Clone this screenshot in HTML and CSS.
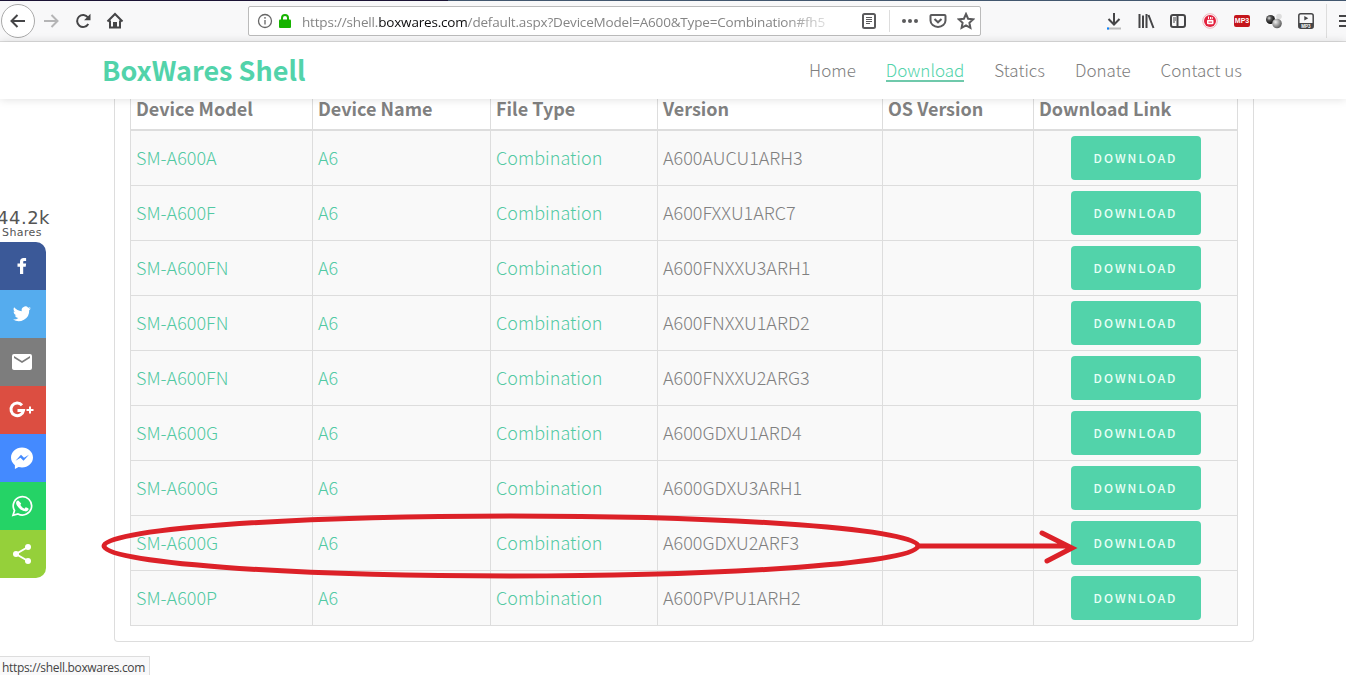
FILE: index.html
```
<!DOCTYPE html>
<html lang="en">
  <head>
    <meta charset="UTF-8">
    <title>BoxWares Shell</title>
    <link rel="stylesheet" href="styles.css">
  </head>
  <body>
    <!-- browser toolbar -->
    <div class="toolbar">
      <div class="tools">
        <span class="tool back"><svg width="18" height="18" viewBox="0 0 18 18"><path d="M16 9H2.500M8.500 3L2.500 9l6 6"/></svg></span>
        <span class="tool forward"><svg width="18" height="18" viewBox="0 0 18 18"><path d="M2 9h13.500M9.500 3l6 6-6 6"/></svg></span>
        <span class="tool"><svg width="18" height="18" viewBox="0 0 18 18"><path d="M14.300 12A6 6 0 1 1 14 5.500"/><path class="solid" d="M16.500 1.800v6.400h-6.400z"/></svg></span>
        <span class="tool"><svg width="18" height="18" viewBox="0 0 18 18"><path d="M1.500 9.500L9 2l7.500 7.500M4 8.500v7h10v-7"/><path class="solid" d="M7 10h4v5H7z"/></svg></span>
      </div>
      <div class="urlbar">
        <svg class="info" width="16" height="16" viewBox="0 0 16 16"><circle cx="8" cy="8" r="6.500"/><path d="M8 7v4.500M8 4v1.700"/></svg>
        <svg class="lock" width="14" height="16" viewBox="0 0 14 16"><path d="M4 7V5a3 3 0 0 1 6 0v2"/><rect x="1" y="6.500" width="12" height="8.500" rx="1"/></svg>
        <span class="url">https://shell.<b>boxwares.com</b>/default.aspx?DeviceModel=A600&amp;Type=Combination#fh5</span>
        <span class="tool reader"><svg width="16" height="18" viewBox="0 0 16 18"><rect x="2" y="2" width="12" height="14" rx="1.500"/><path class="thin" d="M5 5.500h6M5 7.500h6M5 9.500h6M5 11.500h4"/></svg></span>
        <span class="divider"></span>
        <span class="tool dots"><svg width="18" height="6" viewBox="0 0 18 6"><circle cx="3" cy="3" r="2"/><circle cx="9" cy="3" r="2"/><circle cx="15" cy="3" r="2"/></svg></span>
        <span class="tool pocket"><svg width="18" height="16" viewBox="0 0 18 16"><path d="M2.500 2h13a1 1 0 0 1 1 1v4.500a7.500 6.500 0 0 1-15 0V3a1 1 0 0 1 1-1z"/><path d="M5.500 6L9 9.300 12.500 6"/></svg></span>
        <span class="tool star"><svg width="18" height="18" viewBox="0 0 18 18"><path d="M9 2l2.100 4.700 5.100.6-3.800 3.500 1 5.100L9 13.400l-4.400 2.500 1-5.100-3.800-3.500 5.100-.6z"/></svg></span>
      </div>
      <div class="tools addons">
        <span class="tool"><svg width="18" height="18" viewBox="0 0 18 18"><path d="M9 1v11M3.500 7L9 12.500 14.500 7"/><path class="progress" d="M2 16.500h14"/><path class="done" d="M2 16.500h2"/></svg></span>
        <span class="tool"><svg width="18" height="18" viewBox="0 0 18 18"><path d="M2.500 2v14M6 3.500V16M9.500 2v14M11.500 3l5 13"/></svg></span>
        <span class="tool"><svg width="18" height="18" viewBox="0 0 18 18"><rect x="2" y="3" width="14" height="12" rx="2"/><path d="M8.500 3v12"/><path class="thin" d="M4 6h3M4 8h3M4 10h2"/></svg></span>
        <span class="tool"><svg width="18" height="18" viewBox="0 0 18 18"><circle class="ring" cx="9" cy="9" r="7.300"/><circle class="red" cx="9" cy="9" r="6"/><path class="mark" d="M7.500 4.500v2.500M9.500 5v2M11.200 5v2"/><rect class="screen" x="6" y="7.800" width="6.500" height="4.500" rx="1"/><path class="red" d="M7.500 9.600h3.500v1H7.500z"/></svg></span>
        <span class="tool"><span class="mp3">MP3</span></span>
        <span class="tool"><svg width="18" height="18" viewBox="0 0 18 18">
          <defs>
            <radialGradient id="dark" cx=".35" cy=".35" r=".6"><stop offset="0" stop-color="#ddd"/><stop offset=".4" stop-color="#555"/><stop offset="1" stop-color="#111"/></radialGradient>
            <radialGradient id="grey" cx=".35" cy=".35" r=".7"><stop offset="0" stop-color="#eee"/><stop offset="1" stop-color="#555"/></radialGradient>
          </defs>
          <circle cx="14" cy="4.500" r="2.800" fill="#ddd"/><circle cx="5.500" cy="7.500" r="4.500" fill="url(#dark)"/><circle cx="12" cy="11.500" r="4.800" fill="url(#grey)"/></svg></span>
        <span class="tool"><svg width="18" height="18" viewBox="0 0 18 18"><rect class="frame" x="1.800" y="1.800" width="14.400" height="14.400" rx="2"/><path class="solid" d="M2 11h14v5H2zM7.300 4l4 2.300-4 2.300z"/><text class="tiny" x="9" y="15.500">MP3</text></svg></span>
      </div>
      <span class="menu"></span>
    </div>

    <div class="navbar">
      <a class="brand">BoxWares Shell</a>
      <ul class="nav">
        <li><a>Home</a></li>
        <li><a class="active">Download</a></li>
        <li><a>Statics</a></li>
        <li><a>Donate</a></li>
        <li><a>Contact us</a></li>
      </ul>
    </div>

    <div class="panel">
      <table class="files">
        <colgroup><col class="c-model"><col class="c-name"><col class="c-type"><col class="c-version"><col class="c-os"><col class="c-link"></colgroup>
        <thead>
          <tr><th>Device Model</th><th>Device Name</th><th>File Type</th><th>Version</th><th>OS Version</th><th>Download Link</th></tr>
        </thead>
        <tbody>
          <tr><td><a>SM-A600A</a></td><td><a>A6</a></td><td><a>Combination</a></td><td>A600AUCU1ARH3</td><td></td><td class="action"><a class="btn">DOWNLOAD</a></td></tr>
          <tr><td><a>SM-A600F</a></td><td><a>A6</a></td><td><a>Combination</a></td><td>A600FXXU1ARC7</td><td></td><td class="action"><a class="btn">DOWNLOAD</a></td></tr>
          <tr><td><a>SM-A600FN</a></td><td><a>A6</a></td><td><a>Combination</a></td><td>A600FNXXU3ARH1</td><td></td><td class="action"><a class="btn">DOWNLOAD</a></td></tr>
          <tr><td><a>SM-A600FN</a></td><td><a>A6</a></td><td><a>Combination</a></td><td>A600FNXXU1ARD2</td><td></td><td class="action"><a class="btn">DOWNLOAD</a></td></tr>
          <tr><td><a>SM-A600FN</a></td><td><a>A6</a></td><td><a>Combination</a></td><td>A600FNXXU2ARG3</td><td></td><td class="action"><a class="btn">DOWNLOAD</a></td></tr>
          <tr><td><a>SM-A600G</a></td><td><a>A6</a></td><td><a>Combination</a></td><td>A600GDXU1ARD4</td><td></td><td class="action"><a class="btn">DOWNLOAD</a></td></tr>
          <tr><td><a>SM-A600G</a></td><td><a>A6</a></td><td><a>Combination</a></td><td>A600GDXU3ARH1</td><td></td><td class="action"><a class="btn">DOWNLOAD</a></td></tr>
          <tr><td><a>SM-A600G</a></td><td><a>A6</a></td><td><a>Combination</a></td><td>A600GDXU2ARF3</td><td></td><td class="action"><a class="btn">DOWNLOAD</a></td></tr>
          <tr><td><a>SM-A600P</a></td><td><a>A6</a></td><td><a>Combination</a></td><td>A600PVPU1ARH2</td><td></td><td class="action"><a class="btn">DOWNLOAD</a></td></tr>
        </tbody>
      </table>
    </div>

    <!-- floating share buttons -->
    <div class="share">
      <div class="count">44.2k</div>
      <div class="label">Shares</div>
      <div class="buttons">
        <a class="facebook"><svg width="24" height="24" viewBox="0 0 24 24"><path d="M10 20v-7.300H7.500V9.600H10V7.500C10 5.200 11.400 4 13.500 4h2.600v3h-1.700c-1 0-1.200.5-1.200 1.200v1.400h2.900l-.4 3.100h-2.500V20z"/></svg></a>
        <a class="twitter"><svg width="24" height="24" viewBox="0 0 24 24"><path d="M21 6.300c-.7.300-1.400.5-2.100.6.800-.5 1.300-1.200 1.600-2-.7.400-1.500.7-2.300.9a3.700 3.700 0 0 0-6.400 3.400C8.700 9 6 7.500 4.100 5.200c-1 1.700-.5 3.800 1.200 4.900-.6 0-1.200-.2-1.700-.5 0 1.800 1.200 3.300 3 3.700-.6.100-1.100.2-1.700.1.500 1.500 1.900 2.500 3.500 2.600A7.500 7.500 0 0 1 3 17.500 10.500 10.500 0 0 0 19.200 8.200c.7-.5 1.300-1.200 1.800-1.900z"/></svg></a>
        <a class="email"><svg width="24" height="24" viewBox="0 0 24 24"><path d="M20 4H4a2 2 0 0 0-2 2v12c0 1.100.9 2 2 2h16a2 2 0 0 0 2-2V6a2 2 0 0 0-2-2zm0 4l-8 5-8-5V6l8 5 8-5z"/></svg></a>
        <a class="google"><svg width="26" height="24" viewBox="0 0 26 24"><path class="line" d="M14 7.200A6.300 6.300 0 1 0 15.500 12.500H9.500"/><path class="plus" d="M22 8.500v7M18.500 12h7"/></svg></a>
        <a class="messenger"><svg width="24" height="24" viewBox="0 0 24 24"><path d="M12 1.500C5.900 1.500 1 6 1 11.600c0 3.100 1.500 5.800 3.900 7.600V23l3.700-2c1.100.3 2.200.5 3.400.5 6.100 0 11-4.500 11-10S18.100 1.500 12 1.500z"/><path class="bolt" d="M5.500 14.800l5.500-6 3 3 5-3-5.500 6-3-3z"/></svg></a>
        <a class="whatsapp"><svg width="24" height="24" viewBox="0 0 24 24"><path class="outline" d="M3 21.300l1.500-4.800a9.200 9.200 0 1 1 3.500 3.400z"/><path d="M8.800 7c-.3-.6-.6-.6-.9-.6-.8 0-1.800 1-1.800 2.500s1.100 3 1.300 3.200c.1.200 2.100 3.300 5.200 4.500 2.600 1 3.100.8 3.700.7.600 0 1.800-.7 2.100-1.500.2-.7.200-1.300.1-1.400-.3-.3-2.400-1.300-2.700-1.200-.5.300-1 1.500-1.400 1.500-.5 0-2.700-1.300-4-3.600-.1-.4.800-1.200.8-1.600z"/></svg></a>
        <a class="sharethis"><svg width="24" height="24" viewBox="0 0 24 24"><path class="outline" d="M18 5L6 12l12 7"/><circle cx="18" cy="5" r="3"/><circle cx="6" cy="12" r="3"/><circle cx="18" cy="19" r="3"/></svg></a>
      </div>
    </div>

    <!-- hand drawn marker around the SM-A600G row -->
    <svg class="marker" width="980" height="72" viewBox="0 0 980 72">
      <ellipse cx="412" cy="37" rx="407" ry="30"/>
      <path d="M819 37h150M943 24l30 15-25 13"/>
    </svg>

    <div class="status">https://shell.boxwares.com</div>
  </body>
</html>
```
FILE: styles.css
```
* {
  box-sizing: border-box;
}

body {
  margin: 0;
  height: 675px;
  overflow: hidden;
  position: relative;
  background-color: #fff;
  color: #808080;
  font-family: "Noto Sans CJK SC", "Open Sans", sans-serif;
  font-weight: 300;
}

svg {
  display: block;
  flex: none;
}

/* browser toolbar */
.toolbar {
  display: flex;
  align-items: center;
  height: 42px;
  padding-left: 1px;
  overflow: hidden;
  background: linear-gradient(90deg, #1b1335 448px, #42576f 448px) top / 100% 1px no-repeat #f8f8f9;
  border-bottom: 1px solid #ddd;
}

.tools {
  display: flex;
  flex: none;
  align-items: center;
}

.tool {
  display: flex;
  flex: none;
  align-items: center;
  justify-content: center;
  width: 32px;
  height: 32px;
}

.tool svg {
  fill: none;
  stroke: #454547;
  stroke-width: 2;
}

.tool .solid {
  fill: #454547;
  stroke: none;
}

.tool .thin {
  stroke-width: 1;
}

.back {
  width: 34px;
  height: 34px;
  border: 1px solid #aaa;
  border-radius: 50%;
  background-color: #fff;
}

.forward svg {
  stroke: #b5b5b6;
}

.urlbar {
  display: flex;
  flex: none;
  align-items: center;
  width: 733px;
  height: 30px;
  margin-left: 117px;
  padding-left: 8px;
  border: 1px solid #bbb;
  border-radius: 2px;
  background-color: #fff;
}

.info {
  fill: none;
  stroke: #666;
  stroke-width: 1.3;
}

.lock {
  margin: 0 9px 0 5px;
  fill: #16b300;
}

.lock path {
  fill: none;
  stroke: #16b300;
  stroke-width: 2;
}

.url {
  flex: none;
  width: 524px;
  height: 20px;
  margin-left: 1px;
  overflow: hidden;
  color: #858585;
  font: 400 13.5px/22px "Open Sans", sans-serif;
  letter-spacing: -0.18px;
  white-space: nowrap;
  -webkit-mask-image: linear-gradient(90deg, #000 480px, rgba(0, 0, 0, 0.25) 524px);
}

.url b {
  color: #0c0c0d;
  font-weight: 400;
}

.reader {
  margin-left: 27px;
}

.divider {
  flex: none;
  width: 1px;
  height: 22px;
  margin: 0 4px;
  background-color: #ddd;
}

.urlbar .tool svg {
  stroke: #5a5a5c;
}

.dots svg circle {
  fill: #5a5a5c;
  stroke: none;
}

.pocket,
.star {
  width: 28px;
}

.pocket {
  margin-left: -2px;
}

.addons {
  margin-left: 117px;
}

.tool .progress {
  stroke: #bbb;
}

.tool .done {
  stroke: #0a84ff;
}

.tool .ring {
  stroke: #f0b5bd;
  stroke-width: 1;
}

.tool .red {
  fill: #e3203c;
  stroke: none;
}

.tool .mark {
  stroke: #fff;
  stroke-width: 1;
}

.tool .screen {
  fill: #fff;
  stroke: none;
}

.tool circle[fill] {
  stroke: none;
}

.tool .frame {
  stroke-width: 1.500;
}

.mp3 {
  width: 16px;
  height: 12px;
  border-radius: 2px;
  background-color: #c4161c;
  color: #fff;
  font: bold 7px/12px "Liberation Sans", sans-serif;
  text-align: center;
}

.tool .tiny {
  fill: #fff;
  stroke: none;
  font: bold 4.5px "Liberation Sans", sans-serif;
  text-anchor: middle;
}

.menu {
  flex: none;
  width: 21px;
  height: 34px;
  margin-left: 4px;
  border-left: 1px solid #ddd;
  background: repeating-linear-gradient(#454547 0 2px, transparent 2px 5px) 12px 11px / 16px 12px no-repeat;
}

/* site header */
.navbar {
  position: relative;
  z-index: 1;
  display: flex;
  align-items: center;
  justify-content: space-between;
  height: 57px;
  padding: 0 104px 0 102px;
  background-color: #fff;
  box-shadow: 0 0 9px rgba(0, 0, 0, 0.14);
}

.brand {
  padding-bottom: 2px;
  color: #52d3aa;
  font-size: 27px;
  font-weight: 700;
  line-height: 40px;
}

.nav {
  display: flex;
  gap: 30px;
  margin: 0;
  padding: 0;
  list-style: none;
  font-size: 17px;
  line-height: 20px;
}

.nav a {
  display: block;
  white-space: nowrap;
  border-bottom: 2px solid transparent;
}

.nav .active {
  color: #52d3aa;
  border-color: #6fc9ab;
}

/* device table */
.panel {
  width: 1140px;
  height: 543px;
  margin-left: 114px;
  padding: 0 15px;
  border: 1px solid #ddd;
  border-top: none;
  border-radius: 0 0 4px 4px;
}

.files {
  width: 1108px;
  table-layout: fixed;
  border-collapse: separate;
  border-spacing: 0;
  border-left: 1px solid #ddd;
  font-size: 18px;
  line-height: 22px;
}

.c-model { width: 182px; }
.c-name { width: 178px; }
.c-type { width: 167px; }
.c-version { width: 225px; }
.c-os { width: 151px; }
.c-link { width: 204px; }

.files th,
.files td {
  padding: 4px 5px 6px;
  border-right: 1px solid #ddd;
  border-bottom: 1px solid #ddd;
  text-align: left;
  white-space: nowrap;
}

.files th {
  height: 32px;
  padding: 0 5px 11px;
  border-bottom-width: 2px;
  font-weight: 700;
  line-height: 19px;
}

.files td {
  height: 55px;
  background-color: #f9f9f9;
}

.files .action {
  padding: 5px;
}

.files td a {
  color: #52c9a3;
}

.files .btn {
  display: block;
  width: 130px;
  height: 44px;
  margin: 0 auto;
  border-radius: 4px;
  background-color: #52d3aa;
  color: #e8fff7;
  font-size: 12px;
  font-weight: 500;
  line-height: 44px;
  letter-spacing: 2px;
  text-align: center;
}

/* share buttons */
.share {
  position: absolute;
  top: 208px;
  left: 0;
  width: 46px;
  color: #555;
  font-family: "DejaVu Sans", sans-serif;
  font-weight: 400;
}

.count {
  margin-left: -3px;
  font-size: 18px;
  line-height: 19px;
  letter-spacing: 0.5px;
}

.label {
  margin-left: 2px;
  font-size: 11px;
  line-height: 12px;
  letter-spacing: 0.4px;
}

.buttons {
  margin-top: 3px;
  overflow: hidden;
  border-radius: 0 10px 10px 0;
}

.buttons a {
  display: flex;
  align-items: center;
  height: 48px;
  padding-left: 10px;
}

.buttons svg {
  fill: #fff;
}

.buttons .line,
.buttons .plus,
.buttons .outline {
  fill: none;
  stroke: #fff;
  stroke-width: 2;
}

.buttons .line {
  stroke-width: 3;
}

.facebook { background-color: #3b5998; }
.twitter { background-color: #55acee; }
.email { background-color: #7d7d7d; }
.buttons .google { padding-left: 8px; background-color: #dc4e41; }
.messenger { background-color: #448aff; }
.whatsapp { background-color: #25d366; }
.sharethis { background-color: #95d03a; }

.whatsapp .outline {
  stroke-width: 1.700;
}

.bolt {
  fill: #448aff;
}

.marker {
  position: absolute;
  z-index: 2;
  top: 509px;
  left: 99px;
  fill: none;
  stroke: #dc2128;
  stroke-width: 5;
  stroke-linecap: round;
}

/* link preview at the bottom */
.status {
  position: absolute;
  bottom: 0;
  left: 0;
  width: 150px;
  height: 19px;
  padding-left: 2px;
  border: 1px solid #ddd;
  border-width: 1px 1px 0 0;
  background-color: #f9f9fa;
  color: #444;
  font: 400 12px/22px "Open Sans", sans-serif;
  letter-spacing: -0.32px;
  white-space: nowrap;
}
```
